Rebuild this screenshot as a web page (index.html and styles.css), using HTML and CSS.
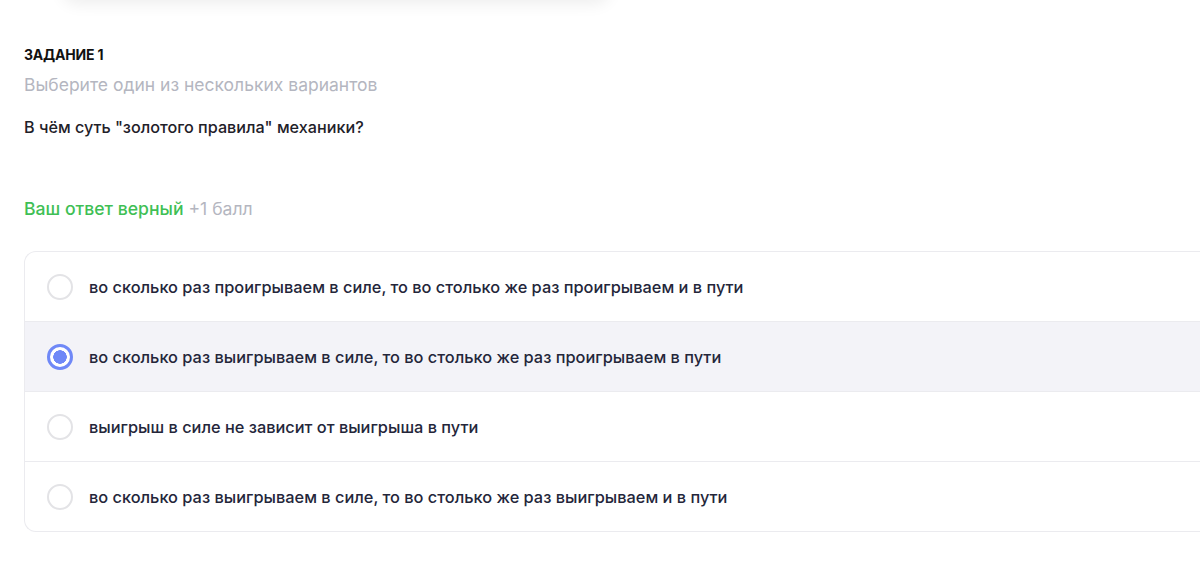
FILE: index.html
```html
<!DOCTYPE html>
<html lang="ru">
<head>
<meta charset="utf-8">
<link rel="stylesheet" href="styles.css">
</head>
<body>
<div class="page">
  <div class="prev-card"></div>
  <div class="task">
    <div class="task-title">ЗАДАНИЕ 1</div>
    <div class="task-hint">Выберите один из нескольких вариантов</div>
    <div class="task-question">В чём суть "золотого правила" механики?</div>
    <div class="result"><span class="ok">Ваш ответ верный</span> <span class="pts">+1 балл</span></div>
    <div class="options">
      <div class="option"><span class="radio"></span><span class="label">во сколько раз проигрываем в силе, то во столько же раз проигрываем и в пути</span></div>
      <div class="option selected"><span class="radio"></span><span class="label">во сколько раз выигрываем в силе, то во столько же раз проигрываем в пути</span></div>
      <div class="option"><span class="radio"></span><span class="label">выигрыш в силе не зависит от выигрыша в пути</span></div>
      <div class="option"><span class="radio"></span><span class="label">во сколько раз выигрываем в силе, то во столько же раз выигрываем и в пути</span></div>
    </div>
  </div>
</div>
</body>
</html>
```

FILE: styles.css
```css
* { box-sizing: border-box; }
html, body { margin: 0; padding: 0; background: #fff; }
body {
  font-family: Inter, "Noto Sans", sans-serif;
  color: #1f2129;
  overflow: hidden;
}
.page { width: 1200px; height: 564px; overflow: hidden; }
.prev-card {
  margin: -30px 0 0 62px;
  width: 548px;
  height: 30px;
  border-radius: 16px;
  background: #fff;
  box-shadow: 0 4px 16px rgba(0,0,0,0.07);
}
.task { padding: 46px 0 0 24px; }
.task-title {
  font-size: 14px;
  font-weight: 700;
  color: #111;
  line-height: 18px;
  letter-spacing: -0.2px;
}
.task-hint {
  margin-top: 10px;
  font-size: 17.5px;
  color: #b4b6c0;
  line-height: 22px;
}
.task-question {
  margin-top: 20px;
  font-size: 16.2px;
  font-weight: 500;
  color: #1f2129;
  line-height: 22px;
}
.result {
  margin-top: 60px;
  font-size: 17.6px;
  line-height: 22px;
}
.ok { color: #3fbf55; font-weight: 500; }
.pts { color: #b4b6c0; }
.options {
  margin-top: 31px;
  border: 1px solid #ebebef;
  border-right: none;
  border-radius: 12px 0 0 12px;
  overflow: hidden;
}
.option {
  height: 70px;
  display: flex;
  align-items: center;
  gap: 16px;
  padding-left: 22px;
  border-top: 1px solid #ebebef;
}
.option:first-child { border-top: none; height: 69px; }
.option.selected { background: #f3f3f8; }
.radio {
  width: 26px;
  height: 26px;
  border-radius: 50%;
  border: 2px solid #e3e3e6;
  flex: none;
  background: #fff;
}
.selected .radio {
  border: 3px solid #6f88f7;
  background: radial-gradient(circle, #6f88f7 0 6.5px, #fff 7px);
}
.label {
  font-size: 16.35px;
  font-weight: 500;
  color: #24263a;
}
```
